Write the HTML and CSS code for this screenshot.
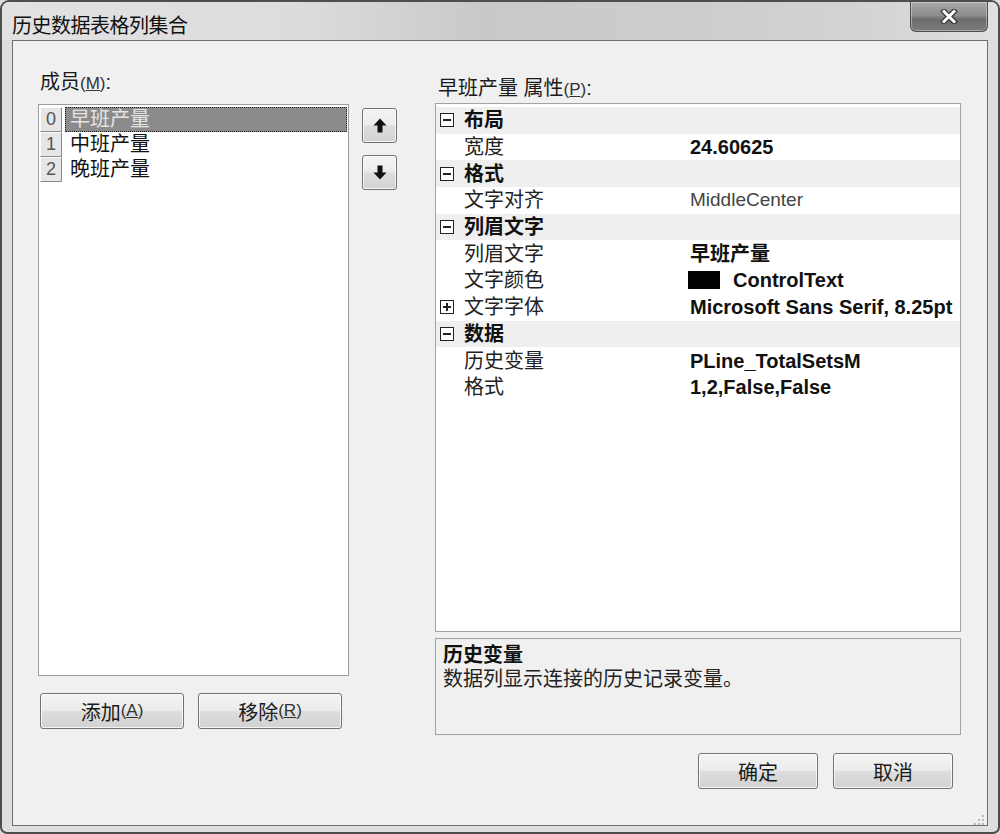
FILE: index.html
```html
<!DOCTYPE html>
<html lang="zh-CN">
<head>
<meta charset="utf-8">
<title>历史数据表格列集合</title>
<link rel="stylesheet" href="styles.css">
</head>
<body>
<div class="window">
  <div class="titlebar">
    <span class="title">历史数据表格列集合</span>
    <div class="close">
      <svg width="18" height="15" viewBox="0 0 18 15"><path d="M4 2.5 L14 12.5 M14 2.5 L4 12.5" stroke="#3a3a3a" stroke-width="5.5" stroke-linecap="square"/><path d="M4 2.5 L14 12.5 M14 2.5 L4 12.5" stroke="#fff" stroke-width="3" stroke-linecap="square"/></svg>
    </div>
  </div>
  <div class="client">
    <div class="main">
      <div class="left">
        <div class="lbl lbl-left">成员<span class="mn">(<u>M</u>)</span>:</div>
        <div class="listbox">
          <div class="item sel"><span class="idx">0</span><span class="txt">早班产量</span></div>
          <div class="item"><span class="idx">1</span><span class="txt">中班产量</span></div>
          <div class="item"><span class="idx">2</span><span class="txt">晚班产量</span></div>
        </div>
        <div class="btnrow">
          <button class="btn btn-wide">添加<span class="mn">(<u>A</u>)</span></button>
          <button class="btn btn-wide">移除<span class="mn">(<u>R</u>)</span></button>
        </div>
      </div>
      <div class="arrows">
        <button class="btn btn-sq"><svg width="14" height="15" viewBox="0 0 14 15"><path d="M7 0.5 L13.5 7.5 H9.5 V14.5 H4.5 V7.5 H0.5 Z" fill="#111"/></svg></button>
        <button class="btn btn-sq"><svg width="14" height="15" viewBox="0 0 14 15"><path d="M7 14.5 L13.5 7.5 H9.5 V0.5 H4.5 V7.5 H0.5 Z" fill="#111"/></svg></button>
      </div>
      <div class="right">
        <div class="lbl lbl-right">早班产量 属性<span class="mn">(<u>P</u>)</span>:</div>
        <div class="grid">
          <div class="row cat"><span class="ico minus"></span><span class="name">布局</span></div>
          <div class="row"><span class="ico none"></span><span class="name">宽度</span><span class="val b">24.60625</span></div>
          <div class="row cat"><span class="ico minus"></span><span class="name">格式</span></div>
          <div class="row"><span class="ico none"></span><span class="name">文字对齐</span><span class="val dflt">MiddleCenter</span></div>
          <div class="row cat"><span class="ico minus"></span><span class="name">列眉文字</span></div>
          <div class="row"><span class="ico none"></span><span class="name">列眉文字</span><span class="val b">早班产量</span></div>
          <div class="row"><span class="ico none"></span><span class="name">文字颜色</span><span class="val b"><span class="swatch"></span>ControlText</span></div>
          <div class="row"><span class="ico plus"></span><span class="name">文字字体</span><span class="val b">Microsoft Sans Serif, 8.25pt</span></div>
          <div class="row cat"><span class="ico minus"></span><span class="name">数据</span></div>
          <div class="row"><span class="ico none"></span><span class="name">历史变量</span><span class="val b">PLine_TotalSetsM</span></div>
          <div class="row"><span class="ico none"></span><span class="name">格式</span><span class="val b">1,2,False,False</span></div>
        </div>
        <div class="help">
          <div class="help-title">历史变量</div>
          <div class="help-desc">数据列显示连接的历史记录变量。</div>
        </div>
      </div>
    </div>
    <div class="footer">
      <button class="btn btn-ok">确定</button>
      <button class="btn btn-ok">取消</button>
    </div>
    <div class="grip">
      <svg width="14" height="14" viewBox="0 0 14 14" fill="#b8b8b8"><rect x="11" y="2" width="2" height="2"/><rect x="7" y="6" width="2" height="2"/><rect x="11" y="6" width="2" height="2"/><rect x="3" y="10" width="2" height="2"/><rect x="7" y="10" width="2" height="2"/><rect x="11" y="10" width="2" height="2"/></svg>
    </div>
  </div>
</div>
</body>
</html>
```
FILE: styles.css
```css
html, body {
  margin: 0;
  padding: 0;
  background: #dcdcdc;
}
body {
  font-family: "Liberation Sans", "Noto Sans CJK SC", sans-serif;
  color: #1a1a1a;
}
.window {
  width: 1000px;
  height: 834px;
  box-sizing: border-box;
  border: 2px solid #4e4e4e;
  border-radius: 9px 9px 7px 7px;
  background: #dedede;
  padding: 0 10px 6px 10px;
  display: flex;
  flex-direction: column;
  overflow: hidden;
}
.titlebar {
  height: 38px;
  margin: 0 -10px;
  padding: 0 10px;
  display: flex;
  justify-content: space-between;
  align-items: flex-start;
  background: linear-gradient(90deg, #e2e2e2 0%, #dcdcdc 30%, #c9c9c9 48%, #cdcdcd 70%, #d4d4d4 88%, #e0e0e0 100%);
}
.title {
  font-family: "Noto Sans CJK SC", sans-serif;
  font-size: 20px;
  line-height: 26px;
  padding-top: 10px;
  color: #111;
  letter-spacing: -0.5px;
}
.close {
  width: 78px;
  height: 30px;
  box-sizing: border-box;
  border: 1px solid #4c4c4c;
  border-top: none;
  border-radius: 0 0 6px 6px;
  background: linear-gradient(180deg, #a9a9a9 0%, #8e8e8e 45%, #6d6d6d 60%, #7a7a7a 100%);
  box-shadow: inset 0 0 0 1px rgba(255,255,255,0.35);
  display: flex;
  align-items: center;
  justify-content: center;
}
.client {
  flex: 1;
  border: 1px solid #6f6f6f;
  background: #f0f0f0;
  display: flex;
  flex-direction: column;
  position: relative;
  font-size: 20px;
}
.mn {
  font-family: "Liberation Sans", sans-serif;
  font-size: 17px;
  color: #333;
}
.main {
  display: flex;
  padding: 0 26px 0 25px;
}
.left {
  width: 311px;
  display: flex;
  flex-direction: column;
  padding-top: 30px;
}
.lbl {
  height: 22px;
  line-height: 22px;
  font-size: 20px;
  white-space: nowrap;
}
.lbl-left {
  margin-bottom: 11px;
  padding-left: 2px;
}
.listbox {
  height: 572px;
  box-sizing: border-box;
  border: 1px solid #9c9c9c;
  background: #fff;
  padding: 2px 1px;
}
.item {
  height: 25px;
  display: flex;
  align-items: stretch;
}
.idx {
  width: 22px;
  box-sizing: border-box;
  border: 1px solid;
  border-color: #fdfdfd #8a8a8a #8a8a8a #fdfdfd;
  background: #e6e6e6;
  color: #555;
  font-size: 18px;
  line-height: 23px;
  text-align: center;
}
.txt {
  flex: 1;
  margin-left: 3px;
  padding-left: 5px;
  line-height: 25px;
  font-size: 20px;
  color: #111;
  box-sizing: border-box;
}
.item.sel .txt {
  background: #8b8b8b;
  color: #e4e4e4;
  outline: 1px dotted #222;
  outline-offset: -1px;
}
.btnrow {
  display: flex;
  gap: 14px;
  margin-top: 17px;
  padding-left: 2px;
}
.btn {
  font-family: "Liberation Sans", "Noto Sans CJK SC", sans-serif;
  font-size: 20px;
  color: #1a1a1a;
  box-sizing: border-box;
  border: 1px solid #727272;
  border-radius: 3px;
  background: linear-gradient(180deg, #f4f4f4 0%, #ebebeb 48%, #dddddd 52%, #d2d2d2 100%);
  box-shadow: inset 0 0 0 1px rgba(255,255,255,0.75);
  padding: 0;
  display: flex;
  align-items: center;
  justify-content: center;
}
.btn-wide {
  width: 144px;
  height: 36px;
}
.arrows {
  margin-left: 13px;
  width: 35px;
  padding-top: 67px;
  display: flex;
  flex-direction: column;
  gap: 12px;
}
.btn-sq {
  width: 35px;
  height: 35px;
}
.right {
  margin-left: 38px;
  width: 526px;
  padding-top: 36px;
  display: flex;
  flex-direction: column;
}
.lbl-right {
  margin-bottom: 4px;
  padding-left: 3px;
}
.grid {
  height: 529px;
  box-sizing: border-box;
  border: 1px solid #a3a3a3;
  background: #fff;
  padding-top: 3px;
}
.row {
  height: 26.7px;
  display: flex;
  align-items: center;
  font-size: 20px;
  color: #222;
  white-space: nowrap;
}
.row.cat {
  background: #efefef;
}
.row.cat .name {
  font-weight: bold;
  color: #111;
}
.ico {
  width: 14px;
  height: 14px;
  margin-left: 4px;
  flex: none;
  box-sizing: border-box;
  position: relative;
}
.ico.minus, .ico.plus {
  border: 1px solid #222;
  background: #fff;
}
.ico.minus::before, .ico.plus::before {
  content: "";
  position: absolute;
  left: 2px;
  right: 2px;
  top: 5px;
  height: 2px;
  background: #222;
}
.ico.plus::after {
  content: "";
  position: absolute;
  top: 2px;
  bottom: 2px;
  left: 5px;
  width: 2px;
  background: #222;
}
.name {
  width: 226px;
  padding-left: 10px;
  flex: none;
  line-height: 26px;
}
.val {
  line-height: 26px;
  font-size: 20px;
  display: flex;
  align-items: center;
}
.val.b {
  font-weight: bold;
  color: #111;
}
.val.dflt {
  color: #444;
  font-size: 19px;
}
.swatch {
  width: 32px;
  height: 18px;
  background: #000;
  margin-right: 13px;
  margin-left: -2px;
}
.help {
  margin-top: 6px;
  height: 97px;
  box-sizing: border-box;
  border: 1px solid #a3a3a3;
  background: #f0f0f0;
  padding: 4px 7px;
}
.help-title {
  font-weight: bold;
  line-height: 24px;
  font-size: 20px;
  color: #111;
}
.help-desc {
  line-height: 24px;
  font-size: 20px;
  color: #222;
}
.footer {
  display: flex;
  justify-content: flex-end;
  gap: 15px;
  padding-right: 34px;
  margin-top: 18px;
}
.btn-ok {
  width: 120px;
  height: 36px;
}
.grip {
  position: absolute;
  right: 2px;
  bottom: 2px;
  width: 14px;
  height: 14px;
}
```
